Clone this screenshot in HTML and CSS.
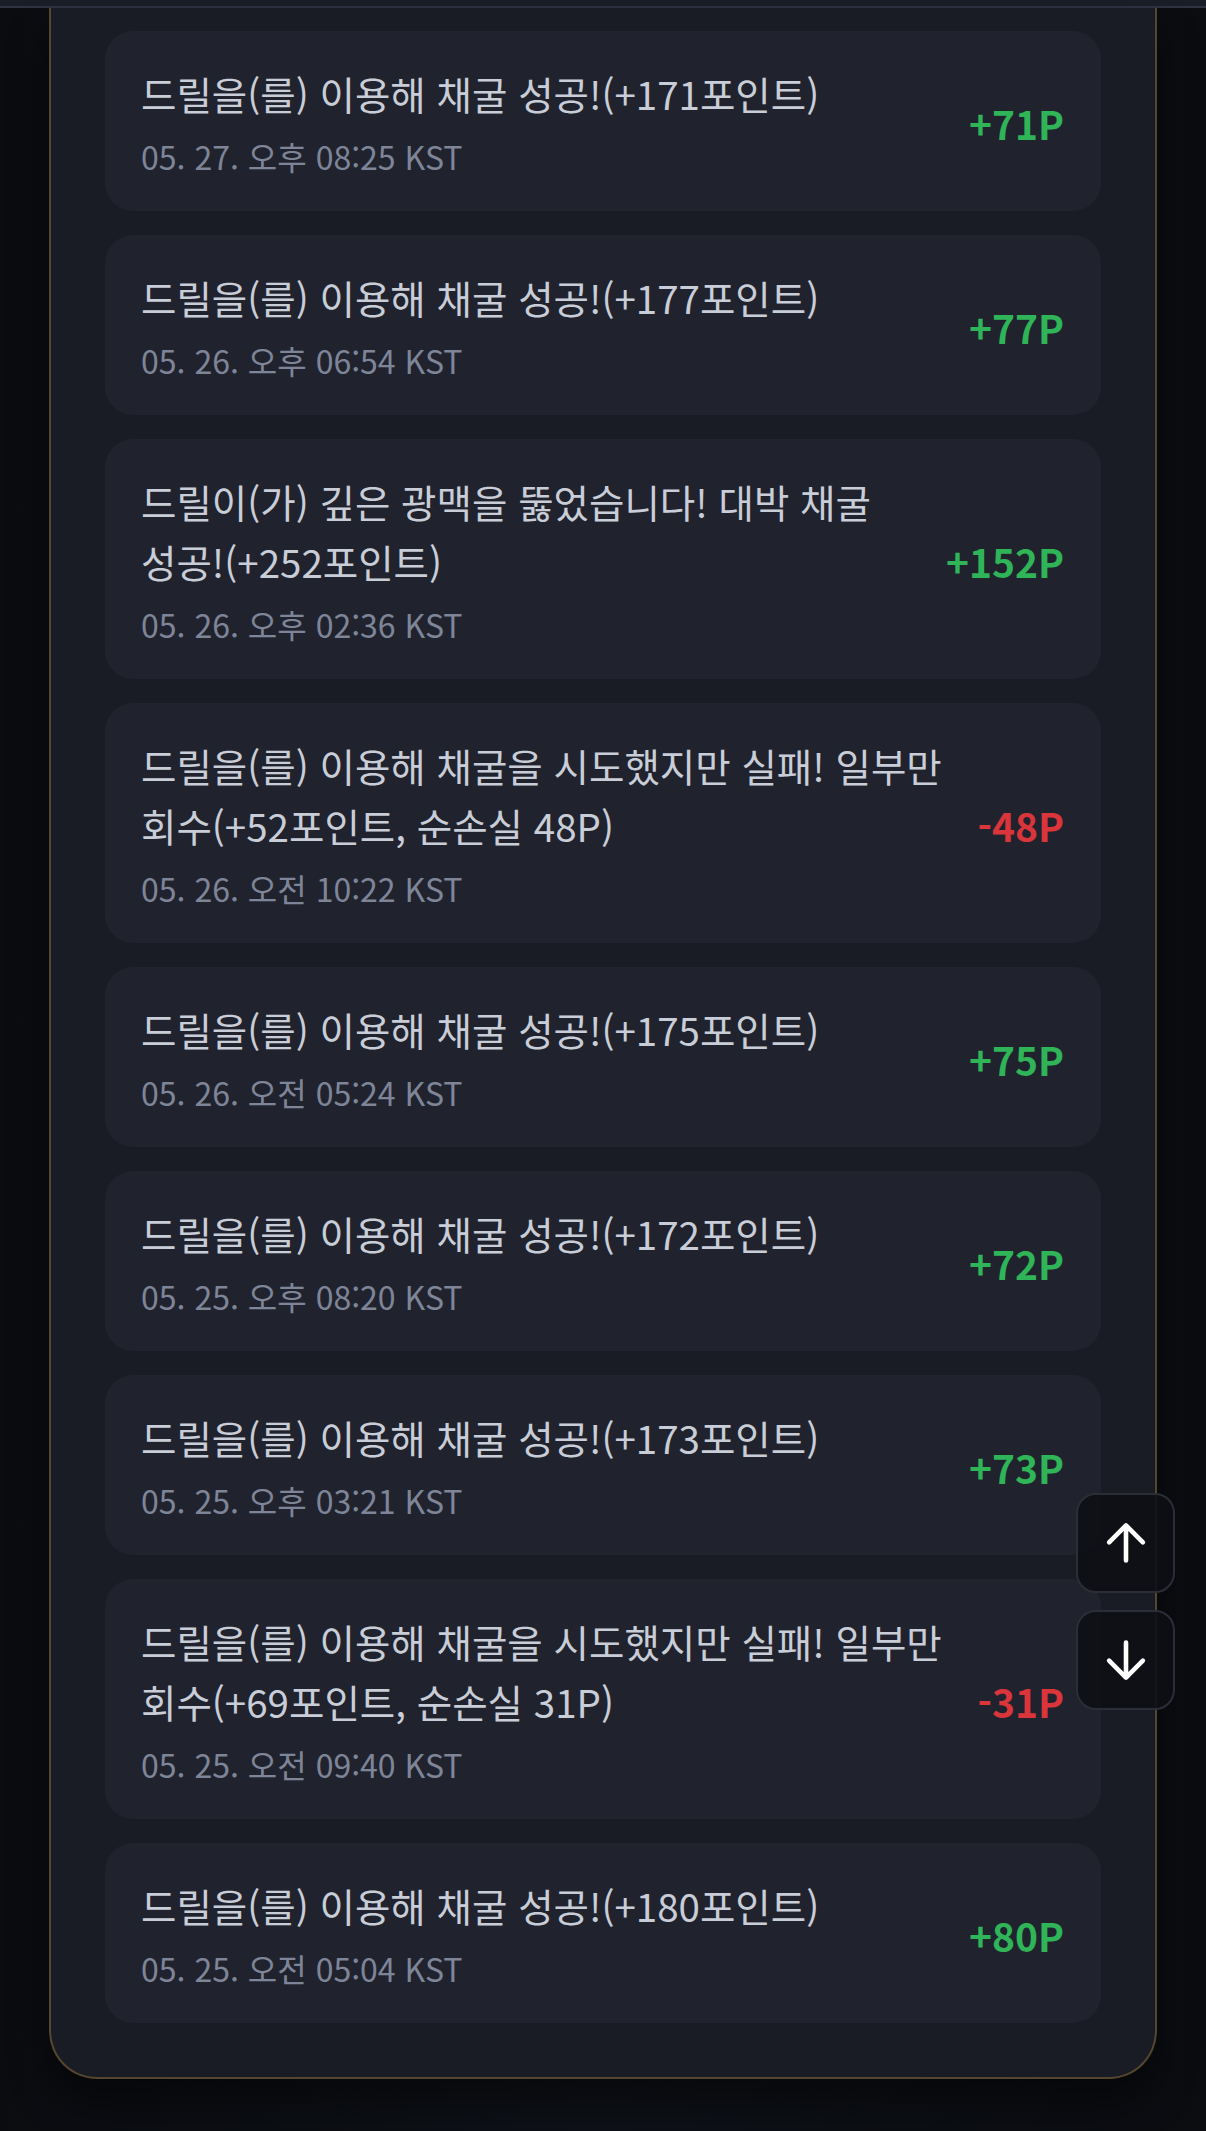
FILE: index.html
```html
<!DOCTYPE html>
<html lang="ko">
<head>
<meta charset="utf-8">
<title>채굴 기록</title>
<link rel="stylesheet" href="styles.css">
</head>
<body>
<div class="topbar"></div>
<main class="panel">
  <ul class="log">
    <li class="entry">
      <div class="info"><p class="msg">드릴을(를) 이용해 채굴 성공!(+171포인트)</p><p class="time">05. 27. 오후 08:25 KST</p></div>
      <span class="amount plus">+71P</span>
    </li>
    <li class="entry">
      <div class="info"><p class="msg">드릴을(를) 이용해 채굴 성공!(+177포인트)</p><p class="time">05. 26. 오후 06:54 KST</p></div>
      <span class="amount plus">+77P</span>
    </li>
    <li class="entry">
      <div class="info"><p class="msg">드릴이(가) 깊은 광맥을 뚫었습니다! 대박 채굴 성공!(+252포인트)</p><p class="time">05. 26. 오후 02:36 KST</p></div>
      <span class="amount plus">+152P</span>
    </li>
    <li class="entry">
      <div class="info"><p class="msg">드릴을(를) 이용해 채굴을 시도했지만 실패! 일부만 회수(+52포인트, 순손실 48P)</p><p class="time">05. 26. 오전 10:22 KST</p></div>
      <span class="amount minus">-48P</span>
    </li>
    <li class="entry">
      <div class="info"><p class="msg">드릴을(를) 이용해 채굴 성공!(+175포인트)</p><p class="time">05. 26. 오전 05:24 KST</p></div>
      <span class="amount plus">+75P</span>
    </li>
    <li class="entry">
      <div class="info"><p class="msg">드릴을(를) 이용해 채굴 성공!(+172포인트)</p><p class="time">05. 25. 오후 08:20 KST</p></div>
      <span class="amount plus">+72P</span>
    </li>
    <li class="entry">
      <div class="info"><p class="msg">드릴을(를) 이용해 채굴 성공!(+173포인트)</p><p class="time">05. 25. 오후 03:21 KST</p></div>
      <span class="amount plus">+73P</span>
    </li>
    <li class="entry">
      <div class="info"><p class="msg">드릴을(를) 이용해 채굴을 시도했지만 실패! 일부만 회수(+69포인트, 순손실 31P)</p><p class="time">05. 25. 오전 09:40 KST</p></div>
      <span class="amount minus">-31P</span>
    </li>
    <li class="entry">
      <div class="info"><p class="msg">드릴을(를) 이용해 채굴 성공!(+180포인트)</p><p class="time">05. 25. 오전 05:04 KST</p></div>
      <span class="amount plus">+80P</span>
    </li>
  </ul>
</main>
<div class="scroll-btns">
  <button class="sbtn" aria-label="맨 위로">
    <svg viewBox="0 0 40 40" width="54" height="54"><path d="M20 33V7.5M7.5 19.5L20 7L32.5 19.5" fill="none" stroke="#fff" stroke-width="3.4" stroke-linecap="round" stroke-linejoin="round"/></svg>
  </button>
  <button class="sbtn" aria-label="맨 아래로">
    <svg viewBox="0 0 40 40" width="54" height="54"><path d="M20 7V32.5M7.5 20.5L20 33L32.5 20.5" fill="none" stroke="#fff" stroke-width="3.4" stroke-linecap="round" stroke-linejoin="round"/></svg>
  </button>
</div>
</body>
</html>
```
FILE: styles.css
```css
html, body {
  margin: 0;
  padding: 0;
}
body {
  background: linear-gradient(90deg, #0a0c10 0%, #0e1117 50%, #0a0c10 100%);
  min-height: 2131px;
  font-family: "Noto Sans CJK KR", "Noto Sans", sans-serif;
}
.topbar {
  height: 6px;
  background: #1b1e28;
  border-bottom: 2px solid #2f3342;
}
.panel {
  margin: 0 49px;
  background: #191c25;
  border: 2px solid #57462f;
  border-top: 0;
  border-radius: 0 0 48px 48px;
  padding: 23px 54px 54px;
  box-shadow: 0 24px 40px rgba(0, 0, 0, 0.45);
}
.log {
  list-style: none;
  margin: 0;
  padding: 0;
  display: flex;
  flex-direction: column;
  gap: 24px;
}
.entry {
  background: #20232e;
  border-radius: 28px;
  padding: 32px 37px 32px 36px;
  display: flex;
  align-items: center;
  gap: 10px;
}
.info {
  flex: 1;
  min-width: 0;
}
.msg {
  margin: 0;
  color: #c9cdd7;
  font-size: 38.5px;
  line-height: 60px;
  word-break: keep-all;
}
.time {
  margin: 11px 0 0;
  color: #7f8598;
  font-size: 32px;
  line-height: 45px;
}
.amount {
  flex-shrink: 0;
  font-size: 39px;
  font-weight: 700;
  line-height: 40px;
  margin-top: 4px;
}
.plus { color: #2fb457; }
.minus { color: #d9353b; }
.scroll-btns {
  position: fixed;
  right: 31px;
  bottom: 421px;
  display: flex;
  flex-direction: column;
  gap: 17px;
}
.sbtn {
  width: 99px;
  height: 100px;
  padding: 0;
  border: 2px solid #2b2e37;
  border-radius: 20px;
  background: rgba(13, 15, 21, 0.88);
  display: flex;
  align-items: center;
  justify-content: center;
}
```
